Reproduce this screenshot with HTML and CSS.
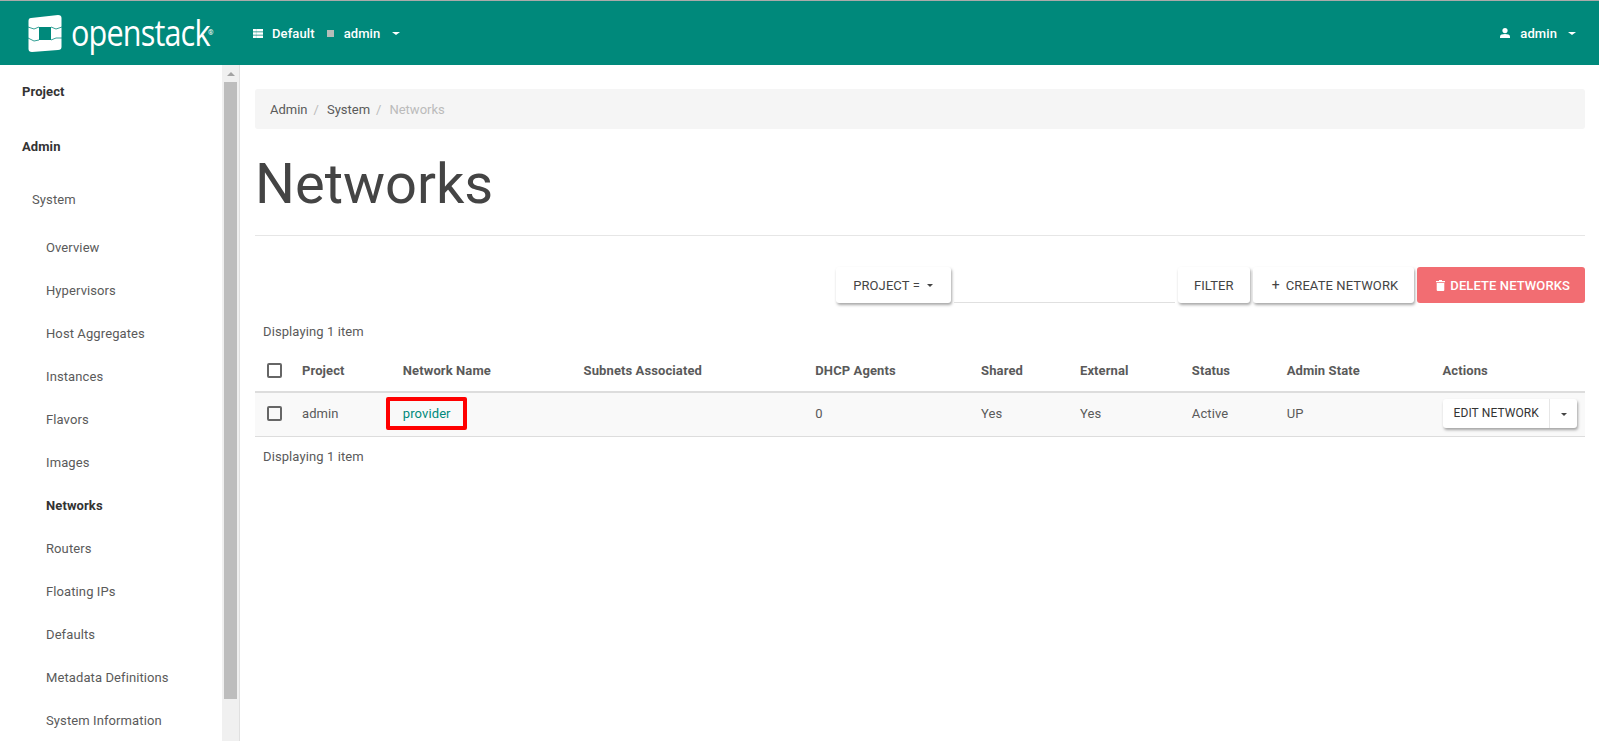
FILE: index.html
```html
<!DOCTYPE html>
<html lang="en">
<head>
    <meta charset="UTF-8">
    <title>Networks - OpenStack Dashboard</title>
    <link rel="stylesheet" href="styles.css">
</head>
<body>
    <header class="topbar">
        <a class="logo" href="#">
            <svg class="logo-mark" width="34" height="37" viewBox="0 0 34 37">
                <path fill="#fff" fill-rule="evenodd" d="M3 3 L30 0 Q33.500 0 33.500 3 L33.500 32 Q33.500 35 30 35 L4 37 Q.5 37 .5 34 L.5 6 Q.5 3 3 3Z M11 12 L23 12 L23 25 L11 25Z"/>
                <path stroke="#00897b" stroke-width=".8" fill="none" d="M0 12 L6 14 L11 12 M0 23 L6 26 L11 25 M23 12 L28 14 L34 12 M23 25 L28 23 L34 23"/>
            </svg>
            <span class="logo-text">openstack</span><sup class="logo-reg">®</sup>
        </a>
        <div class="context">
            <svg class="icon" width="10" height="9" viewBox="0 0 10 9"><path fill="#fff" d="M0 0h10v2.500H0zM0 3.250h10v2.500H0zM0 6.500h10V9H0z"/><path stroke="#00897b" stroke-width=".5" stroke-opacity=".4" d="M3.300 0v9"/></svg>
            <span>Default</span>
            <i class="square"></i>
            <span>admin</span>
            <i class="caret caret-light"></i>
        </div>
        <div class="user">
            <svg class="icon" width="10" height="10" viewBox="0 0 10 10"><circle fill="#fff" cx="5" cy="2.600" r="2.600"/><path fill="#fff" d="M0 10V8.400C0 6.800 2.500 6 5 6s5 .8 5 2.400V10z"/></svg>
            <span>admin</span>
            <i class="caret caret-light"></i>
        </div>
    </header>

    <div class="layout">
        <nav class="sidebar">
            <div class="nav-list">
                <a class="nav-top" href="#">Project</a>
                <a class="nav-top" href="#">Admin</a>
                <a class="nav-group" href="#">System</a>
                <a class="nav-item" href="#">Overview</a>
                <a class="nav-item" href="#">Hypervisors</a>
                <a class="nav-item" href="#">Host Aggregates</a>
                <a class="nav-item" href="#">Instances</a>
                <a class="nav-item" href="#">Flavors</a>
                <a class="nav-item" href="#">Images</a>
                <a class="nav-item active" href="#">Networks</a>
                <a class="nav-item" href="#">Routers</a>
                <a class="nav-item" href="#">Floating IPs</a>
                <a class="nav-item" href="#">Defaults</a>
                <a class="nav-item" href="#">Metadata Definitions</a>
                <a class="nav-item" href="#">System Information</a>
            </div>
            <div class="scrollbar">
                <div class="scroll-up"></div>
                <div class="scroll-thumb"></div>
            </div>
        </nav>

        <main class="content">
            <div class="breadcrumb">
                <a href="#">Admin</a><span class="sep">/</span>
                <a href="#">System</a><span class="sep">/</span>
                <span class="current">Networks</span>
            </div>
            <h1 class="page-title">Networks</h1>

            <div class="toolbar">
                <button class="btn btn-project">PROJECT =<i class="caret"></i></button>
                <div class="filter-input"></div>
                <button class="btn">FILTER</button>
                <button class="btn btn-create"><span class="plus">+</span>CREATE NETWORK</button>
                <button class="btn btn-danger">
                    <svg class="icon" width="9" height="11" viewBox="0 0 9 11"><path fill="#fff" d="M0 1h3V0h3v1h3v1.300H0zM.7 3h7.600v7a1 1 0 0 1-1 1H1.700a1 1 0 0 1-1-1z"/></svg>
                    DELETE NETWORKS
                </button>
            </div>

            <div class="count">Displaying 1 item</div>

            <table class="table">
                <thead>
                    <tr>
                        <th class="col-check"><i class="checkbox"></i></th>
                        <th class="col-project">Project</th>
                        <th class="col-name">Network Name</th>
                        <th class="col-subnets">Subnets Associated</th>
                        <th class="col-dhcp">DHCP Agents</th>
                        <th class="col-shared">Shared</th>
                        <th class="col-external">External</th>
                        <th class="col-status">Status</th>
                        <th class="col-state">Admin State</th>
                        <th>Actions</th>
                    </tr>
                </thead>
                <tbody>
                    <tr>
                        <td><i class="checkbox"></i></td>
                        <td>admin</td>
                        <td class="name-cell"><a class="highlight" href="#">provider</a></td>
                        <td></td>
                        <td>0</td>
                        <td>Yes</td>
                        <td>Yes</td>
                        <td>Active</td>
                        <td>UP</td>
                        <td>
                            <div class="split">
                                <span class="split-main">EDIT NETWORK</span>
                                <span class="split-toggle"><i class="caret"></i></span>
                            </div>
                        </td>
                    </tr>
                </tbody>
            </table>

            <div class="count count-bottom">Displaying 1 item</div>
        </main>
    </div>
</body>
</html>
```

FILE: styles.css
```css
* { box-sizing: border-box; }
html, body { height: 100%; }
body { margin: 0; font-family: Roboto, sans-serif; font-size: 13px; letter-spacing: .1px; color: #5a5a5a; background: #fff; overflow: hidden; }
a { color: inherit; text-decoration: none; }

.topbar { display: flex; align-items: center; height: 65px; background: #00897b; border-top: 1px solid #aaa; color: #fff; font-weight: 500; }
.logo { display: flex; align-items: center; width: 253px; padding-left: 28px; color: #fff; }
.logo-mark { flex: none; }
.logo-text { flex: none; width: 137px; margin-left: 9px; font-family: "Open Sans", sans-serif; font-size: 36px; font-weight: 400; letter-spacing: -1px; transform: scaleX(.85); transform-origin: left center; line-height: 1; }
.logo-reg { font-size: 7px; align-self: flex-start; margin-top: 14px; }
.context { display: flex; align-items: center; }
.context .icon { margin-right: 9px; }
.square { width: 7px; height: 7px; background: #b5bdb9; margin: 0 10px 0 12px; }
.caret { display: inline-block; width: 0; height: 0; border-left: 3px solid transparent; border-right: 3px solid transparent; border-top: 3px solid #444; margin-left: 7px; vertical-align: middle; }
.caret-light { border-left-width: 4px; border-right-width: 4px; border-top-color: #fff; margin-left: 12px; }
.user { display: flex; align-items: center; margin-left: auto; padding-right: 23px; }
.user .icon { margin-right: 10px; }
.user .caret-light { margin-left: 11px; }

.layout { display: flex; height: 676px; }
.sidebar { position: relative; flex: none; width: 240px; border-right: 1px solid #e0e0e0; overflow: hidden; }
.nav-list { display: flex; flex-direction: column; }
.nav-top { height: 55px; padding: 19px 0 0 22px; font-weight: 700; color: #333; }
.nav-group { height: 51px; padding: 17px 0 0 32px; }
.nav-item { height: 43px; padding: 14px 0 0 46px; }
.nav-item.active { font-weight: 700; color: #333; }
.scrollbar { position: absolute; top: 0; right: 0; bottom: 0; width: 17px; background: #f0f0f0; }
.scroll-up { width: 0; height: 0; margin: 7px auto 0; border-left: 4px solid transparent; border-right: 4px solid transparent; border-bottom: 4px solid #a3a3a3; }
.scroll-thumb { width: 13px; height: 617px; margin: 6px 2px 0; background: #bdbdbd; }

.content { flex: 1; padding: 24px 14px 0 15px; }
.breadcrumb { display: flex; align-items: center; height: 40px; padding-left: 15px; background: #f5f5f5; border-radius: 3px; letter-spacing: 0; }
.sep { margin: 0 8px 0 6px; color: #bbb; }
.current { color: #bbb; }
.page-title { margin: 24px 0 0; padding-bottom: 20px; border-bottom: 1px solid #e6e6e6; font-size: 56px; font-weight: 400; letter-spacing: 0; line-height: 62px; color: #444; }

.toolbar { display: flex; justify-content: flex-end; align-items: stretch; gap: 3px; height: 36px; margin-top: 31px; }
.btn { display: flex; align-items: center; padding: 0 16px; border: 0; border-radius: 3px; background: #fff; font: 400 13px Roboto, sans-serif; letter-spacing: .1px; color: #444; box-shadow: 1px 2px 3px rgba(0, 0, 0, .35); }
.btn .caret { margin-left: 7px; }
.btn-project { padding: 0 18px 0 17px; }
.btn-create { padding-left: 19px; }
.plus { margin-right: 6px; font-size: 14px; }
.filter-input { width: 221px; border-bottom: 1px solid #e0e0e0; }
.btn-danger { padding: 0 15px 0 19px; background: #f26d72; color: #fff; font-weight: 500; box-shadow: none; }
.btn-danger .icon { margin-right: 5px; }

.count { padding: 13px 8px 0; height: 32px; margin-top: 8px; }
.count-bottom { margin-top: 0; padding-top: 12px; }

.table { width: 100%; margin-top: 7px; border-collapse: collapse; }
.table th { height: 42px; padding: 0 8px 0 8px; border-bottom: 2px solid #ddd; text-align: left; font-weight: 700; white-space: nowrap; }
.table td { height: 44px; padding: 0 8px 2px; border-bottom: 1px solid #ddd; background: #f9f9f9; }
.col-check { width: 39px; }
.col-project { width: 101px; }
.col-name { width: 181px; }
.col-subnets { width: 232px; }
.col-dhcp { width: 166px; }
.col-shared { width: 99px; }
.col-external { width: 112px; }
.col-status { width: 95px; }
.col-state { width: 156px; }
.checkbox { display: block; width: 15px; height: 15px; margin-left: 4px; border: 2px solid #666; border-radius: 2px; }
.highlight { position: relative; color: #00897b; }
.highlight::after { content: ""; position: absolute; left: -17px; right: -16px; top: -9px; bottom: -9px; border: 4px solid #f00; border-radius: 2px; }
.split { display: inline-flex; align-items: center; height: 29px; border-radius: 3px; background: #fff; font-size: 12px; color: #333; box-shadow: 1px 2px 3px rgba(0, 0, 0, .35); }
.split-main { padding: 0 10px 0 11px; line-height: 29px; white-space: nowrap; border-right: 1px solid #e6e6e6; }
.split-toggle { width: 27px; text-align: center; }
.split-toggle .caret { margin: 0; }
```
